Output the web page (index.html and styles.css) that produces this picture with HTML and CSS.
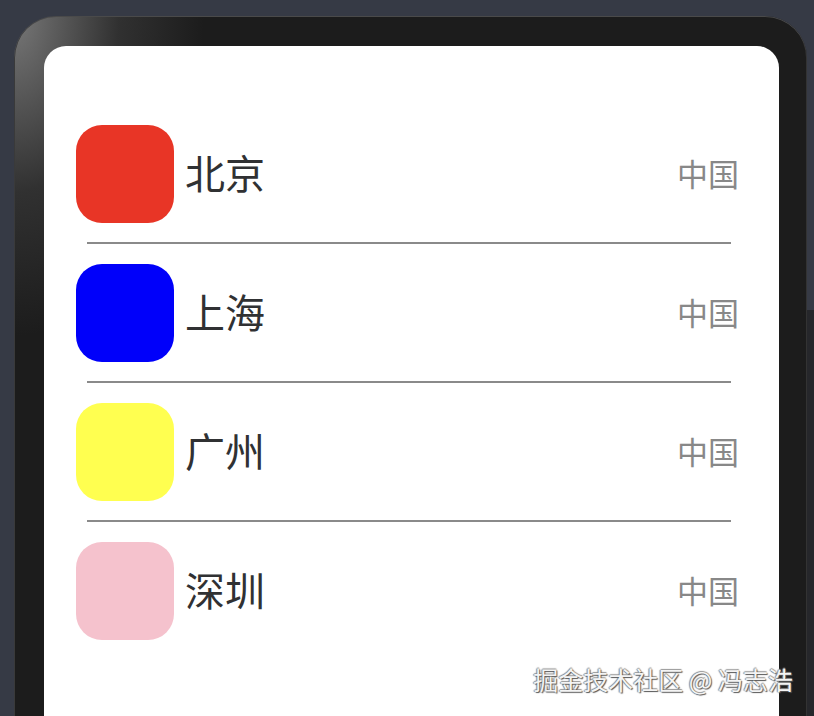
FILE: index.html
```
<!DOCTYPE html>
<html lang="zh-CN">
<head>
    <meta charset="UTF-8">
    <meta name="viewport" content="width=device-width, initial-scale=1.0">
    <title>城市列表</title>
    <link rel="stylesheet" href="styles.css">
</head>
<body>
    <div class="side-strip"></div>
    <div class="phone">
        <div class="screen">
            <ul class="city-list">
                <li class="city-item">
                    <span class="city-icon red"></span>
                    <span class="city-name">北京</span>
                    <span class="city-country">中国</span>
                </li>
                <li class="divider"></li>
                <li class="city-item">
                    <span class="city-icon blue"></span>
                    <span class="city-name">上海</span>
                    <span class="city-country">中国</span>
                </li>
                <li class="divider"></li>
                <li class="city-item">
                    <span class="city-icon yellow"></span>
                    <span class="city-name">广州</span>
                    <span class="city-country">中国</span>
                </li>
                <li class="divider"></li>
                <li class="city-item">
                    <span class="city-icon pink"></span>
                    <span class="city-name">深圳</span>
                    <span class="city-country">中国</span>
                </li>
            </ul>
        </div>
    </div>
    <div class="watermark">掘金技术社区 @ 冯志浩</div>
</body>
</html>
```

FILE: styles.css
```
html, body {
    height: 100%;
}
body {
    margin: 0;
    background-color: #363a45;
    font-family: "Noto Sans CJK SC", "Noto Sans", sans-serif;
    overflow: hidden;
    position: relative;
}
.side-strip {
    position: absolute;
    right: 0;
    top: 310px;
    bottom: 0;
    width: 8px;
    background-color: #26272b;
}
.phone {
    box-sizing: border-box;
    margin: 16px 0 0 14px;
    width: 793px;
    height: 700px;
    padding: 30px 28px 0 30px;
    border-radius: 42px 42px 0 0;
    background:
        radial-gradient(ellipse 190px 320px at 0 0, rgba(130,130,130,0.9), rgba(80,80,80,0.4) 55%, rgba(28,28,28,0) 100%),
        #1c1c1c;
    box-shadow: inset 0 1px 0 #4a4a4a, inset 1px 0 0 #3a3a3a, inset -1px 0 0 #333;
    position: relative;
}
.screen {
    background-color: white;
    height: 100%;
    border-radius: 22px 22px 0 0;
    padding-top: 79px;
    box-sizing: border-box;
}
.city-list {
    list-style: none;
    margin: 0;
    padding: 0;
}
.city-item {
    display: flex;
    align-items: center;
    height: 98px;
    padding: 0 40px 0 32px;
}
.city-icon {
    width: 98px;
    height: 98px;
    border-radius: 26px;
    flex-shrink: 0;
}
.red { background-color: #e83526; }
.blue { background-color: #0000fa; }
.yellow { background-color: #ffff50; }
.pink { background-color: #f5c2cd; }
.city-name {
    flex: 1;
    margin-left: 11px;
    padding-bottom: 5px;
    font-size: 40px;
    color: #303133;
    line-height: 1;
}
.city-country {
    padding-bottom: 4px;
    font-size: 31px;
    color: #888;
    line-height: 1;
}
.divider {
    height: 2px;
    background-color: #8a8a8a;
    margin: 19px 48px 20px 43px;
}
.watermark {
    position: absolute;
    right: 21px;
    bottom: 19px;
    font-size: 25px;
    color: #f4f4f4;
    text-shadow: 1px 1px 1px #555, -1px 0 1px #888, 0 -1px 1px #999;
}
```
